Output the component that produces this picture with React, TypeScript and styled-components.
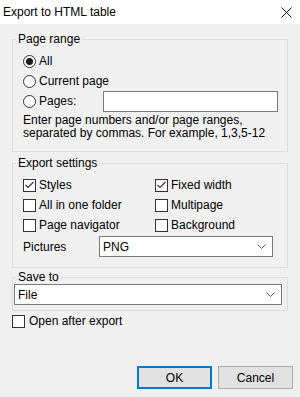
import React from 'react';
import styled, { createGlobalStyle } from 'styled-components';

const GlobalStyle = createGlobalStyle`
  html, body {
    margin: 0;
    padding: 0;
    background: #f0f0f0;
  }
  * {
    box-sizing: border-box;
  }
`;

const Radio = (props: { checked?: boolean }) => (
  <RadioBox>
    <svg width="13" height="13" viewBox="0 0 13 13">
      <circle cx="6.5" cy="6.5" r="6" fill="#fff" stroke="#333" strokeWidth="1" />
      {props.checked && <circle cx="6.5" cy="6.5" r="3.5" fill="#1a1a1a" />}
    </svg>
  </RadioBox>
);

const Check = (props: { checked?: boolean }) => (
  <CheckBox>
    {props.checked && (
      <svg width="11" height="11" viewBox="0 0 11 11">
        <polyline points="1.5,5 4,7.5 9.5,2" fill="none" stroke="#333" strokeWidth="1.1" />
      </svg>
    )}
  </CheckBox>
);

const Chevron = () => (
  <svg width="9" height="5" viewBox="0 0 9 5">
    <polyline points="0.5,0.5 4.5,4.5 8.5,0.5" fill="none" stroke="#555" strokeWidth="1" />
  </svg>
);

const ExportDialog = () => {
  return (
    <Window>
      <GlobalStyle />
      <TitleBar>
        <Title>Export to HTML table</Title>
        <svg width="11" height="11" viewBox="0 0 11 11">
          <line x1="0.5" y1="0.5" x2="10.5" y2="10.5" stroke="#111" strokeWidth="1" />
          <line x1="10.5" y1="0.5" x2="0.5" y2="10.5" stroke="#111" strokeWidth="1" />
        </svg>
      </TitleBar>

      <Body>
        <Group $pb={11}>
          <Legend>Page range</Legend>
          <Inner>
            <Row>
              <Radio checked />
              <span>All</span>
            </Row>
            <Row>
              <Radio />
              <span>Current page</span>
            </Row>
            <Row>
              <Radio />
              <PagesLabel>Pages:</PagesLabel>
              <TextInput />
            </Row>
            <Hint>
              Enter page numbers and/or page ranges,
              <br />
              separated by commas. For example, 1,3,5-12
            </Hint>
          </Inner>
        </Group>

        <Group $mt={4} $pb={10}>
          <Legend>Export settings</Legend>
          <Inner>
            <CheckGrid>
              <Row><Check checked /><span>Styles</span></Row>
              <Row><Check checked /><span>Fixed width</span></Row>
              <Row><Check /><span>All in one folder</span></Row>
              <Row><Check /><span>Multipage</span></Row>
              <Row><Check /><span>Page navigator</span></Row>
              <Row><Check /><span>Background</span></Row>
            </CheckGrid>
            <PicturesRow>
              <FieldLabel>Pictures</FieldLabel>
              <Select $width={174}>
                <span>PNG</span>
                <Chevron />
              </Select>
            </PicturesRow>
          </Inner>
        </Group>

        <Group $mt={2} $pb={5}>
          <Legend>Save to</Legend>
          <SaveInner>
            <Select $width={268}>
              <span>File</span>
              <Chevron />
            </Select>
          </SaveInner>
        </Group>

        <OpenRow>
          <Check />
          <span>Open after export</span>
        </OpenRow>
      </Body>

      <Footer>
        <Button $primary>OK</Button>
        <Button>Cancel</Button>
      </Footer>
    </Window>
  );
};

const Window = styled.div`
  width: 300px;
  height: 397px;
  display: flex;
  flex-direction: column;
  background: #f0f0f0;
  font-family: "Liberation Sans", Arial, sans-serif;
  font-size: 12px;
  color: #000;
`;

const TitleBar = styled.div`
  height: 24px;
  background: #fff;
  display: flex;
  align-items: center;
  justify-content: space-between;
  padding: 0 8px 0 3px;
`;

const Title = styled.div`
  font-size: 12px;
`;

const Body = styled.div`
  padding: 8px 12px 0 12px;
  display: flex;
  flex-direction: column;
`;

const Group = styled.fieldset<{ $mt?: number; $pb?: number }>`
  margin: ${p => p.$mt || 0}px 0 0 0;
  padding: 0 0 ${p => p.$pb || 0}px 0;
  border: 1px solid #dcdcdc;
  min-width: 0;
`;

const Legend = styled.legend`
  margin-left: 3px;
  padding: 0 2px;
  line-height: 14px;
  height: 14px;
`;

const Inner = styled.div`
  padding: 5px 0 0 10px;
`;

const SaveInner = styled.div`
  padding: 0 0 0 1px;
`;

const Row = styled.label`
  height: 20px;
  display: flex;
  align-items: center;
  gap: 3px;
  white-space: nowrap;
`;

const RadioBox = styled.span`
  width: 13px;
  height: 13px;
  display: flex;
`;

const CheckBox = styled.span`
  width: 13px;
  height: 13px;
  border: 1px solid #333;
  background: #fff;
  display: flex;
  align-items: center;
  justify-content: center;
  flex-shrink: 0;
`;

const PagesLabel = styled.span`
  width: 61px;
`;

const TextInput = styled.div`
  width: 175px;
  height: 21px;
  background: #fff;
  border: 1px solid #7a7a7a;
`;

const Hint = styled.div`
  margin-top: 3px;
  line-height: 13px;
`;

const CheckGrid = styled.div`
  display: grid;
  grid-template-columns: 132px 1fr;
`;

const PicturesRow = styled.div`
  margin-top: 1px;
  display: flex;
  align-items: center;
`;

const FieldLabel = styled.span`
  width: 76px;
`;

const Select = styled.div<{ $width: number }>`
  width: ${p => p.$width}px;
  height: 21px;
  background: #fff;
  border: 1px solid #7a7a7a;
  display: flex;
  align-items: center;
  justify-content: space-between;
  padding: 0 6px 0 3px;
`;

const OpenRow = styled(Row)`
  gap: 4px;
`;

const Footer = styled.div`
  margin-top: auto;
  display: flex;
  justify-content: flex-end;
  gap: 6px;
  padding: 0 7px 8px 0;
`;

const Button = styled.button<{ $primary?: boolean }>`
  width: 75px;
  height: 23px;
  margin: 0;
  padding: 0;
  font: inherit;
  color: #000;
  background: #e1e1e1;
  border: ${p => (p.$primary ? '2px solid #0078d7' : '1px solid #adadad')};
`;

export default ExportDialog;
